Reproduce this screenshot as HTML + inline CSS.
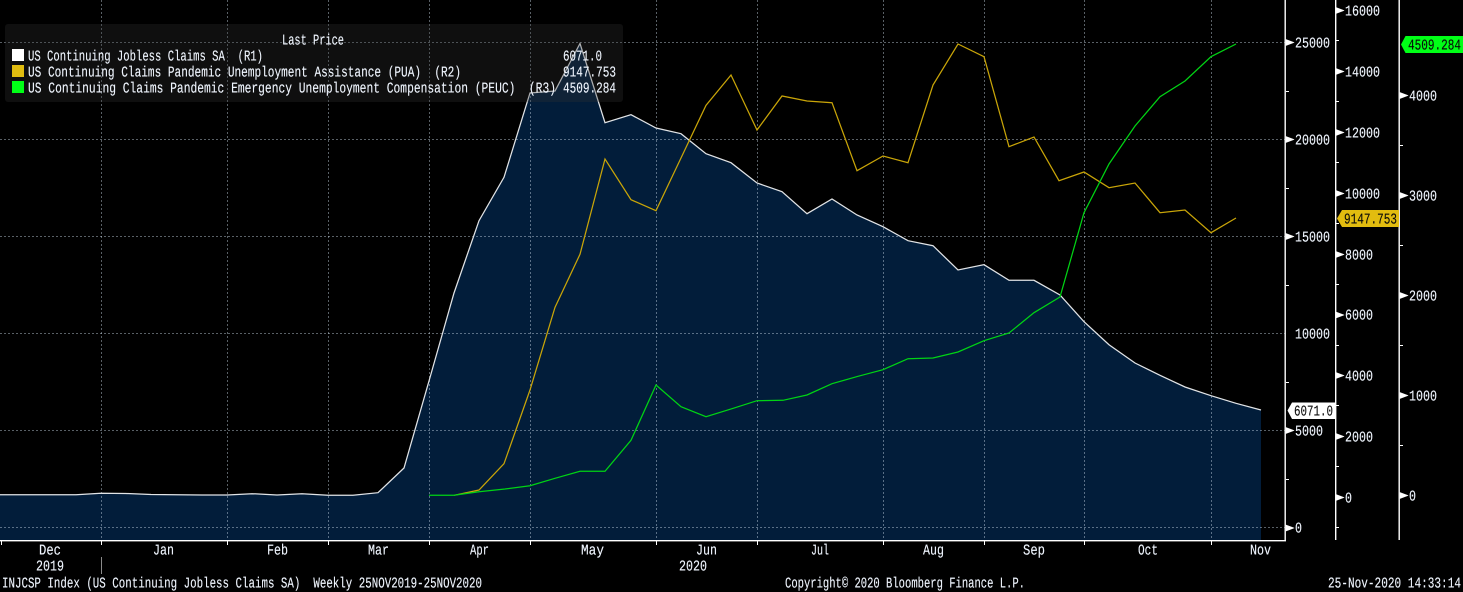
<!DOCTYPE html>
<html><head><meta charset="utf-8"><style>
html,body{margin:0;padding:0;background:#000;width:1463px;height:592px;overflow:hidden}
svg{display:block}
text{font-family:"Liberation Mono",monospace;font-size:15px;fill:#f0f6ff;stroke:#f0f6ff;stroke-width:.12;text-rendering:geometricPrecision;transform:translateY(-.5px)}
text.d{fill:#0a0a0a;stroke:#0a0a0a}
</style></head><body>
<svg width="1463" height="592" viewBox="0 0 1463 592" xmlns="http://www.w3.org/2000/svg">
<polygon fill="#021d3a" points="0,494.7 25,494.7 50,494.7 76,494.7 101,493.3 126,493.5 151,494.5 176,494.7 202,495 227,495 252,493.7 277,495 302,493.7 328,495.3 353,495.3 378,492.7 404,468 429,381 454,293 479,220.7 504,177.3 530,93 555,91 580,43.5 605,122.7 631,114.7 656,128 681,133.7 706,153.7 731,162.7 757,183 782,191.7 807,213.7 832,199 857,215 883,226.7 908,240.7 933,245.7 958,270 984,264.7 1009,280.3 1034,280.3 1060,295 1084,321.7 1109,344.7 1135,363 1160,375.3 1185,387 1211,395.7 1236,403.3 1261,410 1261,540 0,540"/>
<g stroke="#d5e4f4" stroke-opacity=".42" stroke-width="1" stroke-dasharray="2 2" fill="none">
<path d="M0 42.5H1285M0 139.5H1285M0 236.5H1285M0 333.5H1285M0 430.5H1285M0 527.5H1285"/>
<path d="M101.5 0V540M227.5 0V540M328.5 0V540M429.5 0V540M530.5 0V540M656.5 0V540M757.5 0V540M883.5 0V540M984.5 0V540M1084.5 0V540M1211.5 0V540"/>
</g>
<g fill="none" stroke-width="1.25" stroke-linejoin="miter">
<polyline stroke="#e2e4e6" points="0,494.7 25,494.7 50,494.7 76,494.7 101,493.3 126,493.5 151,494.5 176,494.7 202,495 227,495 252,493.7 277,495 302,493.7 328,495.3 353,495.3 378,492.7 404,468 429,381 454,293 479,220.7 504,177.3 530,93 555,91 580,43.5 605,122.7 631,114.7 656,128 681,133.7 706,153.7 731,162.7 757,183 782,191.7 807,213.7 832,199 857,215 883,226.7 908,240.7 933,245.7 958,270 984,264.7 1009,280.3 1034,280.3 1060,295 1084,321.7 1109,344.7 1135,363 1160,375.3 1185,387 1211,395.7 1236,403.3 1261,410"/>
<polyline stroke="#c9a508" points="454,495.3 479,490 504,463.7 530,390 555,307.3 580,254.3 605,159 631,199.7 656,210.7 681,158 706,105.3 731,75 757,130 782,96 807,101 832,102.7 857,170.7 883,156 908,162.7 933,85 958,44 984,56.7 1009,146.7 1034,137 1059,180.7 1084,172 1109,187.7 1135,183 1160,212.7 1185,210 1211,232.7 1236,218"/>
<polyline stroke="#00d414" points="429,495.3 454,495.3 479,491.7 505,489 530,485.7 555,478.3 580,471.3 605,471.3 631,440.3 656,385 681,406.7 706,416.7 732,408.7 757,400.7 783,400.3 807,395 832,383.7 858,376.3 883,369.7 908,358.7 933,358 958,352 984,340.7 1009,333 1034,312.7 1060,297 1084,212.7 1109,164 1135,126 1160,96.7 1185,81 1211,56.7 1236,44"/>
</g>
<rect x="5" y="24" width="618" height="78" rx="3" fill="#323232" fill-opacity=".3"/>
<rect x="12" y="49" width="12" height="12" fill="#fff"/>
<rect x="12" y="65" width="12" height="12" fill="#e0bc10"/>
<rect x="12" y="81" width="12" height="12" fill="#00ff16"/>
<text x="282" y="45" textLength="62" lengthAdjust="spacingAndGlyphs">Last Price</text>
<text x="28" y="61" textLength="235" lengthAdjust="spacingAndGlyphs" xml:space="preserve">US Continuing Jobless Claims SA  (R1)</text>
<text x="28" y="77" textLength="433" lengthAdjust="spacingAndGlyphs" xml:space="preserve">US Continuing Claims Pandemic Unemployment Assistance (PUA)  (R2)</text>
<text x="28" y="93" textLength="528" lengthAdjust="spacingAndGlyphs" xml:space="preserve">US Continuing Claims Pandemic Emergency Unemployment Compensation (PEUC)  (R3)</text>
<text x="563" y="61" textLength="39" lengthAdjust="spacingAndGlyphs">6071.0</text>
<text x="563" y="77" textLength="53" lengthAdjust="spacingAndGlyphs">9147.753</text>
<text x="563" y="93" textLength="53" lengthAdjust="spacingAndGlyphs">4509.284</text>
<g fill="#fff">
<rect x="0" y="540" width="1286" height="1.4"/>
<rect x="1284.5" y="0" width="1.4" height="541"/>
<rect x="1335" y="0" width="1.4" height="540"/>
<rect x="1398.5" y="0" width="1.4" height="540"/>
<path d="M1 541h1v4h-1zM101 541h1v4h-1zM227 541h1v4h-1zM328 541h1v4h-1zM429 541h1v4h-1zM530 541h1v4h-1zM656 541h1v4h-1zM757 541h1v4h-1zM883 541h1v4h-1zM984 541h1v4h-1zM1084 541h1v4h-1zM1211 541h1v4h-1z"/>
<path d="M1286 91h3v1h-3zM1286 188h3v1h-3zM1286 285h3v1h-3zM1286 382h3v1h-3zM1286 479h3v1h-3z"/>
<path d="M1336 40h3v1h-3zM1336 101h3v1h-3zM1336 162h3v1h-3zM1336 223h3v1h-3zM1336 284h3v1h-3zM1336 345h3v1h-3zM1336 405h3v1h-3zM1336 466h3v1h-3zM1336 527h3v1h-3z"/>
<path d="M1400 145h3v1h-3zM1400 245h3v1h-3zM1400 345h3v1h-3zM1400 445h3v1h-3z"/>
</g>
<g fill="#fff" stroke="#fff" stroke-width=".6" stroke-linejoin="round">
<path d="M1286 39.5L1294 42.5L1286 45.5zM1286 136.5L1294 139.5L1286 142.5zM1286 233.5L1294 236.5L1286 239.5zM1286 427.5L1294 430.5L1286 433.5zM1286 525L1294 528L1286 531z"/>
<path d="M1336 7.5L1344 10.5L1336 13.5zM1336 68.5L1344 71.5L1336 74.5zM1336 129.5L1344 132.5L1336 135.5zM1336 190.5L1344 193.5L1336 196.5zM1336 251.5L1344 254.5L1336 257.5zM1336 312L1344 315L1336 318zM1336 372.5L1344 375.5L1336 378.5zM1336 433.5L1344 436.5L1336 439.5zM1336 494.5L1344 497.5L1336 500.5z"/>
<path d="M1400 92.5L1408 95.5L1400 98.5zM1400 192.5L1408 195.5L1400 198.5zM1400 292.5L1408 295.5L1400 298.5zM1400 392.5L1408 395.5L1400 398.5zM1400 492.5L1408 495.5L1400 498.5z"/>
</g>
<rect x="101" y="557" width="1" height="17" fill="#8a8a8a"/>
<text x="1295" y="48" textLength="35" lengthAdjust="spacingAndGlyphs">25000</text>
<text x="1295" y="145" textLength="35" lengthAdjust="spacingAndGlyphs">20000</text>
<text x="1295" y="242" textLength="35" lengthAdjust="spacingAndGlyphs">15000</text>
<text x="1295" y="339" textLength="35" lengthAdjust="spacingAndGlyphs">10000</text>
<text x="1295" y="436" textLength="28" lengthAdjust="spacingAndGlyphs">5000</text>
<text x="1295" y="533" textLength="7" lengthAdjust="spacingAndGlyphs">0</text>
<text x="1345" y="16" textLength="35" lengthAdjust="spacingAndGlyphs">16000</text>
<text x="1345" y="77" textLength="35" lengthAdjust="spacingAndGlyphs">14000</text>
<text x="1345" y="138" textLength="35" lengthAdjust="spacingAndGlyphs">12000</text>
<text x="1345" y="199" textLength="35" lengthAdjust="spacingAndGlyphs">10000</text>
<text x="1345" y="260" textLength="28" lengthAdjust="spacingAndGlyphs">8000</text>
<text x="1345" y="320" textLength="28" lengthAdjust="spacingAndGlyphs">6000</text>
<text x="1345" y="381" textLength="28" lengthAdjust="spacingAndGlyphs">4000</text>
<text x="1345" y="442" textLength="28" lengthAdjust="spacingAndGlyphs">2000</text>
<text x="1345" y="503" textLength="7" lengthAdjust="spacingAndGlyphs">0</text>
<text x="1409" y="101" textLength="28" lengthAdjust="spacingAndGlyphs">4000</text>
<text x="1409" y="201" textLength="28" lengthAdjust="spacingAndGlyphs">3000</text>
<text x="1409" y="301" textLength="28" lengthAdjust="spacingAndGlyphs">2000</text>
<text x="1409" y="401" textLength="28" lengthAdjust="spacingAndGlyphs">1000</text>
<text x="1409" y="501" textLength="7" lengthAdjust="spacingAndGlyphs">0</text>
<polygon fill="#00ff16" points="1401,44.5 1405.5,36 1463,36 1463,53 1405.5,53"/>
<text class="d" x="1408" y="50" textLength="53" lengthAdjust="spacingAndGlyphs">4509.284</text>
<polygon fill="#e2bc0f" points="1337,218.5 1342,210 1399,210 1399,227 1342,227"/>
<text class="d" x="1344" y="224" textLength="53" lengthAdjust="spacingAndGlyphs">9147.753</text>
<polygon fill="#fff" points="1287.5,410.5 1292,402.5 1335,402.5 1335,419 1292,419"/>
<text class="d" x="1294" y="416" textLength="39" lengthAdjust="spacingAndGlyphs">6071.0</text>
<text x="39" y="555" textLength="22" lengthAdjust="spacingAndGlyphs">Dec</text>
<text x="36" y="571" textLength="28" lengthAdjust="spacingAndGlyphs">2019</text>
<text x="153" y="555" textLength="21" lengthAdjust="spacingAndGlyphs">Jan</text>
<text x="267" y="555" textLength="21" lengthAdjust="spacingAndGlyphs">Feb</text>
<text x="368" y="555" textLength="21" lengthAdjust="spacingAndGlyphs">Mar</text>
<text x="470" y="555" textLength="19" lengthAdjust="spacingAndGlyphs">Apr</text>
<text x="581" y="555" textLength="23" lengthAdjust="spacingAndGlyphs">May</text>
<text x="696" y="555" textLength="21" lengthAdjust="spacingAndGlyphs">Jun</text>
<text x="679" y="571" textLength="28" lengthAdjust="spacingAndGlyphs">2020</text>
<text x="811" y="555" textLength="18" lengthAdjust="spacingAndGlyphs">Jul</text>
<text x="923" y="555" textLength="21" lengthAdjust="spacingAndGlyphs">Aug</text>
<text x="1023" y="555" textLength="22" lengthAdjust="spacingAndGlyphs">Sep</text>
<text x="1138" y="555" textLength="20" lengthAdjust="spacingAndGlyphs">Oct</text>
<text x="1250" y="555" textLength="21" lengthAdjust="spacingAndGlyphs">Nov</text>
<text x="2" y="588" textLength="480" lengthAdjust="spacingAndGlyphs" xml:space="preserve">INJCSP Index (US Continuing Jobless Claims SA)  Weekly 25NOV2019-25NOV2020</text>
<text x="785" y="588" textLength="240" lengthAdjust="spacingAndGlyphs">Copyright© 2020 Bloomberg Finance L.P.</text>
<text x="1328" y="588" textLength="133" lengthAdjust="spacingAndGlyphs">25-Nov-2020 14:33:14</text>
</svg>
</body></html>
